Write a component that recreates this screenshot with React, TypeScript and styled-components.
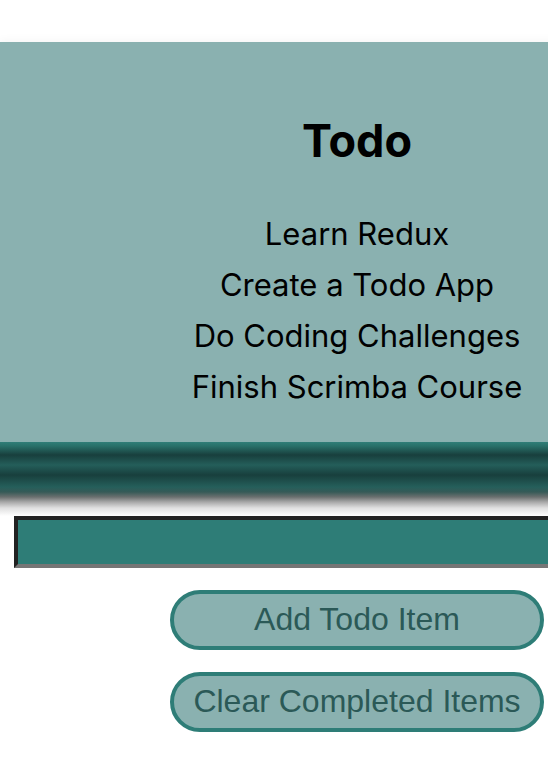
import { useState } from "react";
import styled, { createGlobalStyle } from "styled-components";

const GlobalStyle = createGlobalStyle`
  * { box-sizing: border-box; }
  html { overflow: hidden; }
  body { margin: 0; background: #fff; font-family: Inter, "Liberation Sans", sans-serif; }
`;

const Page = styled.main`
  min-width: 714px;
  padding-top: 42px;
`;

const Panel = styled.section`
  background: #8ab1b0;
  padding: 71px 20px 30px;
  text-align: center;
  color: #000;
  box-shadow: 0 0 10px rgba(0, 0, 0, 0.06);
`;

const Title = styled.h1`
  margin: 0 0 39px;
  font-size: 45px;
  line-height: 56px;
  font-weight: 700;
`;

const List = styled.ul`
  list-style: none;
  margin: 0;
  padding: 0;
`;

const Item = styled.li`
  font-size: 31px;
  line-height: 51px;
`;

const Shade = styled.div`
  height: 74px;
  background: linear-gradient(
    #307e78 0,
    #297069 4px,
    #183f3d 13px,
    #245e5a 23px,
    #183f3d 33px,
    #255f5b 45px,
    #365a57 50px,
    #6b706f 55px,
    #a8a8a8 60px,
    #e0e0e0 66px,
    #fff 74px
  );
`;

const Form = styled.form`
  display: flex;
  flex-direction: column;
  align-items: center;
  gap: 22px;
  padding: 0 14px;
`;

const TextBox = styled.input`
  width: 100%;
  height: 52px;
  padding: 4px 8px;
  border: 4px solid;
  border-color: #222 #767676 #767676 #222;
  border-radius: 0;
  background: #2e7d77;
  color: #fff;
  font: 30px Inter, sans-serif;
  outline: none;
`;

const PillButton = styled.button`
  width: 374px;
  height: 60px;
  padding: 0 0 2px;
  border: 4px solid #2e7d77;
  border-radius: 30px;
  background: #8ab1b0;
  color: #2b5957;
  font: 32px "Liberation Sans", Arial, sans-serif;
`;

const startingItems = [
  "Learn Redux",
  "Create a Todo App",
  "Do Coding Challenges",
  "Finish Scrimba Course",
];

export default function App() {
  const [items, setItems] = useState(startingItems);
  const [draft, setDraft] = useState("");

  const addItem = () => {
    if (!draft.trim()) return;
    setItems([...items, draft.trim()]);
    setDraft("");
  };

  return (
    <Page>
      <GlobalStyle />
      <Panel>
        <Title>Todo</Title>
        <List>
          {items.map((item) => (
            <Item key={item}>{item}</Item>
          ))}
        </List>
      </Panel>
      <Shade />
      <Form
        onSubmit={(event) => {
          event.preventDefault();
          addItem();
        }}
      >
        <TextBox
          aria-label="New todo item"
          value={draft}
          onChange={(event) => setDraft(event.target.value)}
        />
        <PillButton type="submit">Add Todo Item</PillButton>
        <PillButton type="button" onClick={() => setItems([])}>
          Clear Completed Items
        </PillButton>
      </Form>
    </Page>
  );
}
